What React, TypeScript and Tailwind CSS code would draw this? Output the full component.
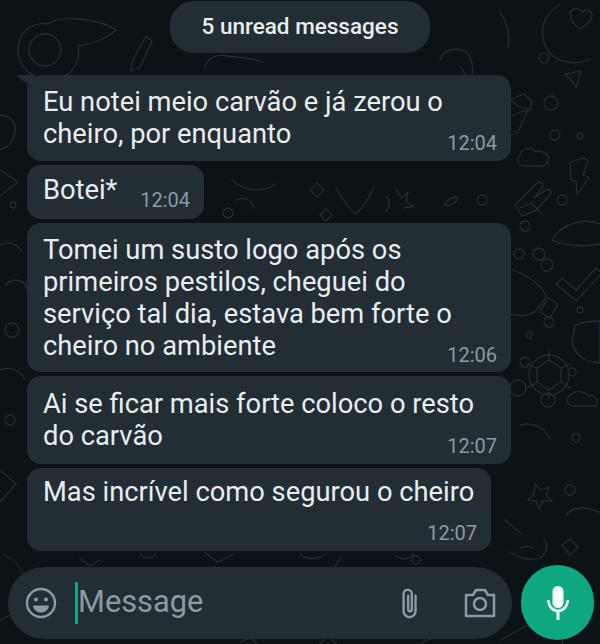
function Doodles() {
  // wallpaper: faint line drawings behind the chat
  return (
    <svg className="absolute inset-0 w-full h-full" viewBox="0 0 600 644" fill="none" stroke="#222c32" strokeWidth={1.3} strokeLinecap="round" strokeLinejoin="round">
      <path d="M18 50c0-18 14-28 30-26 10-8 46-8 68 6-8 8-24 14-38 16 4 20-12 36-30 34-18-2-30-14-30-30z" />
      <circle cx="45" cy="50" r="16" />
      <path d="M132 62l14-26 6 5-12 26-9 4z" />
      <path d="M205 70c0-12 12-16 22-14 14 2 26 2 36 6" />
      <path d="M440 60c4-12 20-14 28-6 6 8 6 22 0 30" />
      <path d="M460 66l6 10M500 12c8 12 10 24 8 36" />
      <path d="M560 5c-20 10-24 36-6 52 10 6 24 8 36 2" />
      <path d="M570 12c4-5 10-4 12 0 3-3 9-2 10 3 0 6-6 10-12 14-5-3-10-8-10-17z" />
      <circle cx="544" cy="58" r="5" />
      <path d="M510 100l14-6 8 8-2 8-12-4zM512 115l16-5-10 22-8 4" />
      <path d="M565 74l16-3-5 17-4-7z" />
      <circle cx="551" cy="103" r="7" />
      <circle cx="555" cy="135" r="5" />
      <circle cx="580" cy="136" r="3" />
      <path d="M520 155c2-8 14-8 16-3 6-2 14 2 12 9-1 5-6 5-10 5h-14c-6 0-8-8-4-11z" />
      <path d="M570 162l14-4 4 3-5 14 6 2-12 18-1-14-5-1z" />
      <path d="M515 205l22-22c3-3 8 1 5 5l-8 10 12-8c3-2 7 2 4 5l-14 15-14 6z" />
      <circle cx="562" cy="200" r="5" />
      <path d="M552 240c10-18 34-22 48-16M552 240c8 4 30 8 48 4" />
      <path d="M0 115c12 0 18 10 14 22-3 8-10 12-14 12" />
      <path d="M0 170l18 12-18 14" />
      <circle cx="13" cy="205" r="3" />
      <path d="M5 285c8-8 20-6 22 4M0 245c8-4 16-2 22 6" />
      <circle cx="12" cy="330" r="7" />
      <path d="M0 370c10-4 20 0 24 8" />
      <circle cx="10" cy="420" r="5" />
      <path d="M0 470l16 14-16 18" />
      <path d="M4 555c10 4 16 10 20 22" />
      <path d="M0 620l16-8 8 16" />
      <circle cx="228" cy="213" r="5" />
      <path d="M232 180c10 10 30 14 44 4M236 200c8-4 16 0 18 8" />
      <path d="M310 190l7-7 7 7-7 7z" />
      <path d="M320 215l6-6 6 6-6 6z" />
      <path d="M336 188c6 10 12 20 20 26 8-8 14-16 18-28" />
      <path d="M386 196c4 4 4 10 0 16M396 190l6 8 6-6-2 10 8 4-10 2" />
      <path d="M444 205c6 2 12-2 14-8-4 0-10 2-14 8z" />
      <circle cx="482" cy="200" r="5" />
      <path d="M520 208l14-6" />
      <path d="M540 212l-8-8" />
      <circle cx="525" cy="226" r="5" />
      <circle cx="539" cy="254" r="6" />
      <circle cx="519" cy="254" r="5" />
      <circle cx="547" cy="265" r="6" />
      <path d="M562 278l14 12 20-22 6 5-26 28-20-17z" />
      <path d="M512 270c18 6 30 16 34 26-8 20-22 22-36 18" />
      <path d="M548 298l-8 14 10 6 8-14z" />
      <circle cx="549" cy="322" r="5" />
      <circle cx="529" cy="335" r="3" />
      <circle cx="580" cy="310" r="3" />
      <path d="M575 325c10-4 25-4 25-4v42c-12 0-24-6-28-20z" />
      <circle cx="549" cy="375" r="20" />
      <path d="M537 368l12-8 12 8v14l-12 8-12-8zM549 350v10M537 368l-10-4M561 368l10-4M537 382l-10 6M561 382l10 6M549 390v8" />
      <circle cx="525" cy="362" r="5" />
      <circle cx="572" cy="372" r="4" />
      <circle cx="518" cy="388" r="8" />
      <circle cx="548" cy="400" r="7" />
      <path d="M570 396c4-6 14-6 18 0 6-2 12 4 8 10h-24c-6-2-6-8-2-10z" />
      <path d="M520 425c14-4 26 4 30 14" />
      <circle cx="576" cy="438" r="4" />
      <path d="M535 484l6 6 8-3-3 8 6 6-9 0-4 8-3-8-8-1 6-6z" />
      <circle cx="570" cy="490" r="5" />
      <path d="M566 515c8-10 24-8 34-2" />
      <path d="M505 520l16 14" />
      <path d="M510 552c6 4 18 10 30 6 8-6 8-14 4-20" />
      <path d="M520 548c4-2 10-2 14 0" />
      <path d="M562 545l8-6 8 8-8 8z" />
      <path d="M80 558l10 8 10-6" />
      <path d="M140 554c4 4 10 6 16 0" />
      <path d="M204 552l14 10 16-8" />
      <path d="M300 554c6 6 18 6 26 0" />
      <path d="M342 556l-8 12" />
      <path d="M396 556c6 4 14 4 18-2" />
      <circle cx="416" cy="560" r="4" />
      <path d="M500 640l26-14h40l-4 18" />
      <path d="M240 642l10-4 8 6M320 643l8-6 8 6M420 643l10-4" />
    </svg>
  );
}

type Msg = { lines: string[]; time: string; box: string; timeBox: string; tail?: boolean };

const messages: Msg[] = [
  { lines: ["Eu notei meio carvão e já zerou o", "cheiro, por enquanto"], time: "12:04", box: "w-[484px] pt-[11px] pb-[6px]", timeBox: "-mt-[19px]", tail: true },
  { lines: ["Botei*"], time: "12:04", box: "w-[177px] h-[54px] pt-[9px] flex justify-between", timeBox: "mt-[14px]" },
  { lines: ["Tomei um susto logo após os", "primeiros pestilos, cheguei do", "serviço tal dia, estava bem forte o", "cheiro no ambiente"], time: "12:06", box: "w-[484px] pt-[11px] pb-[5px]", timeBox: "-mt-[19px]" },
  { lines: ["Ai se ficar mais forte coloco o resto", "do carvão"], time: "12:07", box: "w-[484px] pt-[12px] pb-[6px]", timeBox: "-mt-[18px]" },
  { lines: ["Mas incrível como segurou o cheiro"], time: "12:07", box: "w-[464px] pt-[8px] pb-[6px]", timeBox: "mt-[13px]" },
];

function Bubble({ m }: { m: Msg }) {
  return (
    <div className={`relative ${m.box} rounded-[14px] bg-[#222d34] pl-[16px] pr-[14px]`}>
      {m.tail && <div className="absolute -left-[11px] top-0 w-[18px] h-[14px] bg-[#222d34] [clip-path:polygon(0_0,100%_0,100%_100%)]" />}
      <div className="text-[#e9edef] text-[27.3px] leading-[32px] whitespace-nowrap">
        {m.lines.map((l) => (
          <div key={l}>{l}</div>
        ))}
      </div>
      <div className={`text-[#8d9aa2] text-[20px] leading-[24px] text-right ${m.timeBox}`}>{m.time}</div>
    </div>
  );
}

export default function App() {
  return (
    <div className="relative w-[600px] h-[644px] overflow-hidden bg-[#0b1317] font-['Roboto',sans-serif]">
      <Doodles />
      <div className="relative flex flex-col h-full">
        <div className="flex justify-center pt-px">
          <div className="w-[260px] h-[52px] rounded-[24px] bg-[#222d34] flex items-center justify-center text-[#e9edef] text-[22.500px] font-medium">
            5 unread messages
          </div>
        </div>
        <div className="flex flex-col gap-1 pl-[27px] pt-[22px]">
          {messages.map((m) => (
            <Bubble key={m.lines[0]} m={m} />
          ))}
        </div>
        <div className="flex items-center gap-[9px] pl-2 pr-[6px] mt-[14px]">
          <div className="w-[504px] h-[72px] rounded-[36px] bg-[#222d34] flex items-center pl-[17px] pr-[16px]">
            <svg viewBox="0 0 32 32" className="w-[32px] h-[32px]" fill="none" stroke="#8d9aa2" strokeWidth={2.4}>
              <circle cx="16" cy="16" r="14" />
              <circle cx="11" cy="12.5" r="2" fill="#8d9aa2" stroke="none" />
              <circle cx="21" cy="12.5" r="2" fill="#8d9aa2" stroke="none" />
              <path d="M8 18.5h16c-.6 4.500-4 7-8 7s-7.400-2.500-8-7z" fill="#8d9aa2" stroke="none" />
            </svg>
            <div className="ml-[18px] w-[3px] h-[42px] bg-[#12a583]" />
            <div className="text-[#8d9aa2] text-[30.800px] leading-none">Message</div>
            <svg viewBox="0 0 24 36" className="ml-auto w-[22px] h-[36px]" fill="none" stroke="#8d9aa2" strokeWidth={2.6} strokeLinecap="round">
              <path d="M18 10v17a6.500 6.500 0 0 1-13 0V8a4.500 4.500 0 0 1 9 0v17a2 2 0 0 1-4 0V10" />
            </svg>
            <svg viewBox="0 0 32 32" className="ml-[43px] w-[32px] h-[32px]" fill="none" stroke="#8d9aa2" strokeWidth={2.500} strokeLinejoin="round">
              <path d="M2 8h7l3-5h9l3 5h6v21H2z" />
              <circle cx="16" cy="17" r="6" />
            </svg>
          </div>
          <div className="w-[73px] h-[75px] rounded-full bg-[#10a881] flex items-center justify-center">
            <svg viewBox="0 0 24 36" className="w-[24px] h-[36px]" fill="#f2fbf8">
              <rect x="6.500" y="1" width="11" height="22" rx="5.500" />
              <path d="M1 15h2.500c.5 6 4 9.500 8.500 9.500s8-3.500 8.500-9.500H23c-.4 7-4.500 11.500-9.500 12.300V35h-3v-7.700C5.500 26.500 1.400 22 1 15z" />
            </svg>
          </div>
        </div>
      </div>
    </div>
  );
}
